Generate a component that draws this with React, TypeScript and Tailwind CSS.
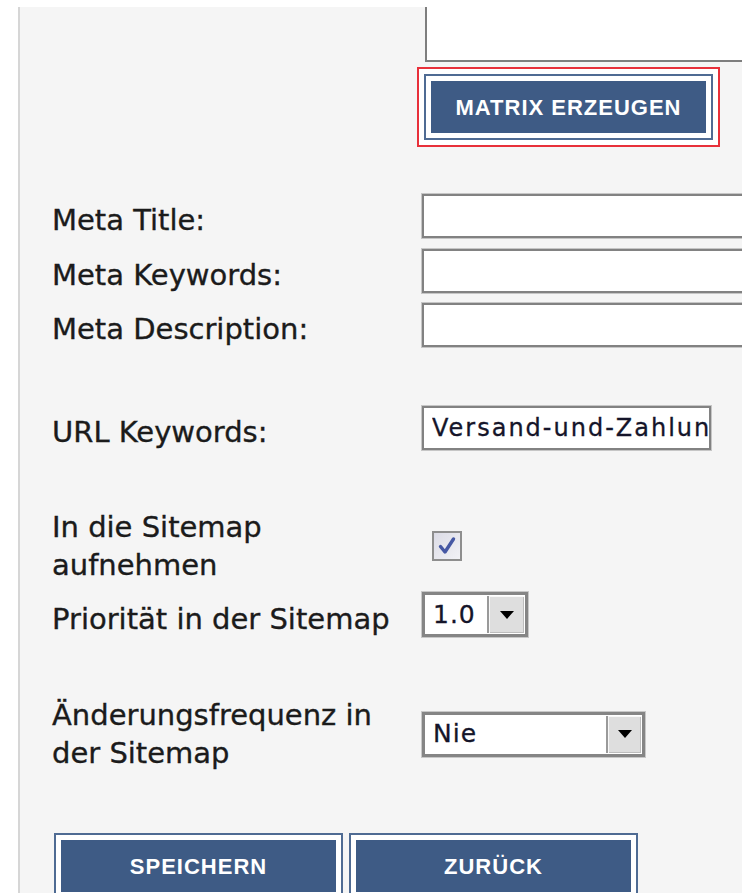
import React from "react";

function BlueButton({ label, focused = false }: { label: string; focused?: boolean }) {
  const core = (
    <div className="border-2 border-[#4f6b93] bg-white p-[5px]">
      <div className="flex h-[52px] w-[275px] items-center justify-center bg-[#3e5b85] font-['Liberation_Sans',Arial,sans-serif] text-[22px] font-bold tracking-[1px] text-white">
        {label}
      </div>
    </div>
  );
  if (!focused) return core;
  return <div className="border-2 border-[#e8303a] bg-white p-[5px]">{core}</div>;
}

function TextBox({ value, narrow = false }: { value?: string; narrow?: boolean }) {
  return (
    <input
      readOnly
      value={value ?? ""}
      className={`block h-[44px] border-2 border-[#828282] bg-white pl-[8px] font-['DejaVu_Sans',Verdana,sans-serif] text-[24px] tracking-[2px] text-[#15152a] outline outline-1 outline-[#c6c6c6] [-webkit-text-stroke:0.3px_#15152a] ${
        narrow ? "w-[289px]" : "-mr-[4px] w-[calc(100%+4px)] border-r-0"
      }`}
    />
  );
}

function Triangle() {
  return (
    <svg width="14" height="8" viewBox="0 0 14 8">
      <path d="M0 0 L14 0 L7 8 Z" fill="#000" />
    </svg>
  );
}

function SelectBox({ value, width, btn }: { value: string; width: string; btn: string }) {
  return (
    <div
      className={`flex h-[45px] border-[3px] border-[#858585] bg-white outline outline-1 outline-[#c8c8c8] ${width}`}
    >
      <div className="flex flex-1 items-center pl-[8px] text-[25px] tracking-[1px] text-[#15152a] [-webkit-text-stroke:0.3px_#15152a]">
        {value}
      </div>
      <div
        className={`my-[1px] mr-[1px] flex items-center justify-center border-l-2 border-[#9a9a9a] bg-[#dedede] shadow-[inset_1px_1px_0_#f8f8f8,inset_-1px_-1px_0_#bdbdbd] ${btn}`}
      >
        <Triangle />
      </div>
    </div>
  );
}

function Row({
  label,
  children,
  className = "",
  labelPad = "pt-[8px]",
}: {
  label: React.ReactNode;
  children: React.ReactNode;
  className?: string;
  labelPad?: string;
}) {
  return (
    <div className={`flex shrink-0 items-center ${className}`}>
      <div
        className={`w-[370px] shrink-0 whitespace-nowrap text-[29px] leading-[38px] text-[#1b1b1b] [-webkit-text-stroke:0.35px_#1b1b1b] ${labelPad}`}
      >
        {label}
      </div>
      <div className="min-w-0 flex-1">{children}</div>
    </div>
  );
}

export default function App() {
  return (
    <div className="h-[893px] w-[742px] overflow-hidden bg-white font-['DejaVu_Sans',Verdana,sans-serif]">
      <div className="h-[7px] bg-white" />
      <div className="flex">
        <div className="w-[18px] shrink-0 bg-white" />
        <div className="w-[2px] shrink-0 bg-[#d6d6d6]" />
        <div className="flex min-w-0 flex-1 flex-col bg-[#f5f5f5] pb-[20px] pl-[32px]">
          {/* description textarea, scrolled so its top edge is out of view */}
          <div className="flex shrink-0">
            <div className="w-[370px] shrink-0" />
            <div className="min-w-0 flex-1 pl-[3px]">
              <div className="-mr-[4px] h-[55px] border-2 border-r-0 border-t-0 border-[#7e7e7e] bg-white" />
            </div>
          </div>

          <div className="mt-[5px] flex shrink-0">
            <div className="w-[365px] shrink-0" />
            <BlueButton label="MATRIX ERZEUGEN" focused />
          </div>

          <Row label="Meta Title:" className="mt-[46px] h-[45px]">
            <TextBox />
          </Row>
          <Row label="Meta Keywords:" className="mt-[10px] h-[45px]">
            <TextBox />
          </Row>
          <Row label="Meta Description:" className="mt-[9px] h-[45px]">
            <TextBox />
          </Row>

          <Row label="URL Keywords:" className="mt-[58px] h-[45px]">
            <TextBox value="Versand-und-Zahlungsbedingungen" narrow />
          </Row>

          <Row
            label={
              <>
                In die Sitemap
                <br />
                aufnehmen
              </>
            }
            labelPad="pt-0"
            className="mt-[58px] h-[76px]"
          >
            <div className="ml-[10px] flex h-[30px] w-[30px] items-center justify-center border-2 border-[#8e8e8e] bg-gradient-to-br from-[#dcdce6] to-[#f2f2f6]">
              <svg width="20" height="20" viewBox="0 0 20 20">
                <path
                  d="M3.5 10.5 L8 16 L16.5 3"
                  fill="none"
                  stroke="#4658a4"
                  strokeWidth="3.4"
                  strokeLinecap="round"
                  strokeLinejoin="round"
                />
              </svg>
            </div>
          </Row>

          <Row label="Priorität in der Sitemap" className="mt-[8px] h-[45px]">
            <SelectBox value="1.0" width="w-[106px]" btn="w-[37px]" />
          </Row>

          <Row
            label={
              <>
                Änderungsfrequenz in
                <br />
                der Sitemap
              </>
            }
            labelPad="pt-0"
            className="mt-[59px] h-[76px]"
          >
            <SelectBox value="Nie" width="w-[223px]" btn="w-[35px]" />
          </Row>

          <div className="ml-[2px] mt-[61px] flex shrink-0 gap-[6px]">
            <BlueButton label="SPEICHERN" />
            <BlueButton label="ZURÜCK" />
          </div>
        </div>
      </div>
    </div>
  );
}
